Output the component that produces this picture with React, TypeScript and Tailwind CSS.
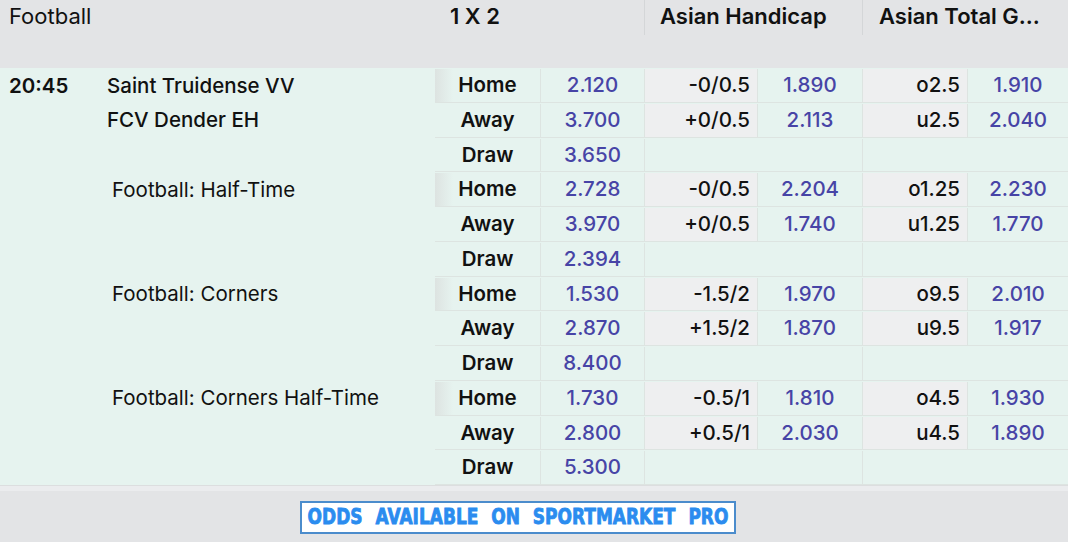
import React from "react";

type Line = { label: string; odd: string; ah?: string; ahOdd?: string; tot?: string; totOdd?: string; home?: boolean; last?: boolean };

const groups: { left: "match" | string; rows: Line[] }[] = [
  {
    left: "match",
    rows: [
      { label: "Home", odd: "2.120", ah: "-0/0.5", ahOdd: "1.890", tot: "o2.5", totOdd: "1.910", home: true },
      { label: "Away", odd: "3.700", ah: "+0/0.5", ahOdd: "2.113", tot: "u2.5", totOdd: "2.040" },
      { label: "Draw", odd: "3.650" },
    ],
  },
  {
    left: "Football: Half-Time",
    rows: [
      { label: "Home", odd: "2.728", ah: "-0/0.5", ahOdd: "2.204", tot: "o1.25", totOdd: "2.230", home: true },
      { label: "Away", odd: "3.970", ah: "+0/0.5", ahOdd: "1.740", tot: "u1.25", totOdd: "1.770" },
      { label: "Draw", odd: "2.394" },
    ],
  },
  {
    left: "Football: Corners",
    rows: [
      { label: "Home", odd: "1.530", ah: "-1.5/2", ahOdd: "1.970", tot: "o9.5", totOdd: "2.010", home: true },
      { label: "Away", odd: "2.870", ah: "+1.5/2", ahOdd: "1.870", tot: "u9.5", totOdd: "1.917" },
      { label: "Draw", odd: "8.400" },
    ],
  },
  {
    left: "Football: Corners Half-Time",
    rows: [
      { label: "Home", odd: "1.730", ah: "-0.5/1", ahOdd: "1.810", tot: "o4.5", totOdd: "1.930", home: true },
      { label: "Away", odd: "2.800", ah: "+0.5/1", ahOdd: "2.030", tot: "u4.5", totOdd: "1.890" },
      { label: "Draw", odd: "5.300", last: true },
    ],
  },
];

function Row({ r }: { r: Line }) {
  const labelBg = r.home
    ? "bg-[linear-gradient(to_right,#dde3e1,#e6f3ef_18px)]"
    : "bg-[#e6f3ef]";
  return (
    <div className="grid h-[34.75px] grid-cols-[105px_104px_113px_105px_105px_1fr] border-b border-[#dde4e1] pt-[1px] text-[20.5px]">
      <div className={`flex items-center justify-center font-semibold text-[#111] ${labelBg} ${r.last ? "rounded-bl-[7px]" : ""}`}>
        {r.label}
      </div>
      <div className="flex items-center justify-center border-l border-[#dde4e1] font-medium text-[#4744a6]">
        {r.odd}
      </div>
      {r.ah ? (
        <>
          <div className="flex items-center justify-end border-l border-[#dde4e1] bg-[#eeeff0] pr-[7px] font-medium text-[#111]">
            {r.ah}
          </div>
          <div className="flex items-center justify-center border-l border-[#dde4e1] font-medium text-[#4744a6]">
            {r.ahOdd}
          </div>
          <div className="flex items-center justify-end border-l border-[#dde4e1] bg-[#eeeff0] pr-[7px] font-medium text-[#111]">
            {r.tot}
          </div>
          <div className="flex items-center justify-center border-l border-[#dde4e1] font-medium text-[#4744a6]">
            {r.totOdd}
          </div>
        </>
      ) : (
        <>
          <div className="col-span-2 border-l border-[#dde4e1]" />
          <div className="col-span-2 border-l border-[#dde4e1]" />
        </>
      )}
    </div>
  );
}

export default function App() {
  return (
    <div className="flex h-[542px] w-[1068px] flex-col overflow-hidden bg-[#e3e4e6] font-['Inter',sans-serif] text-[#111]">
      {/* header */}
      <div className="flex h-[68px] shrink-0 text-[22px] leading-[30px]">
        <div className="w-[435px] pl-[9px] pt-[1px] font-normal">Football</div>
        <div className="w-[209px] pl-[15px] pt-[1px] font-semibold">1 X 2</div>
        <div className="w-[218px]">
          <div className="h-[35px] border-l border-[#d4d6d8] pl-[15px] pt-[1px] font-semibold">Asian Handicap</div>
        </div>
        <div className="flex-1">
          <div className="h-[35px] border-l border-[#d4d6d8] pl-[16px] pt-[1px] font-semibold">Asian Total G...</div>
        </div>
      </div>

      {/* body */}
      <div className="flex shrink-0 flex-col bg-[#e6f3ef]">
        {groups.map((g, i) => (
          <div key={i} className="flex">
            <div className="w-[435px] shrink-0">
              {g.left === "match" ? (
                <div className="flex">
                  <div className="flex h-[34.75px] w-[107px] items-center pl-[9px] pt-[1px] text-[20.5px] font-semibold">20:45</div>
                  <div className="flex flex-col text-[20.5px] font-medium">
                    <div className="flex h-[34.75px] items-center pt-[1px]">Saint Truidense VV</div>
                    <div className="flex h-[34.75px] items-center pt-[1px]">FCV Dender EH</div>
                  </div>
                </div>
              ) : (
                <div className="flex h-[34.75px] items-center pl-[112px] pt-[1px] text-[20.5px] font-normal">{g.left}</div>
              )}
            </div>
            <div className="flex-1">
              {g.rows.map((r, j) => (
                <Row key={j} r={r} />
              ))}
            </div>
          </div>
        ))}
      </div>

      {/* bottom strip */}
      <div className="h-[6px] shrink-0 border-t border-[#dcdedf] bg-[#ebecee]" />

      {/* banner */}
      <div className="mt-[10px] pl-[300px]">
        <div className="flex h-[33px] w-[436px] items-center justify-center border-2 border-[#4b8ccc] bg-white">
          <span className="scale-y-[1.25] whitespace-nowrap font-['DejaVu_Sans',sans-serif] text-[17px] font-bold uppercase leading-none text-[#2b8cef] [-webkit-text-stroke:0.7px_#2b8cef] [word-spacing:7px]">
            Odds available on sportmarket pro
          </span>
        </div>
      </div>
    </div>
  );
}
